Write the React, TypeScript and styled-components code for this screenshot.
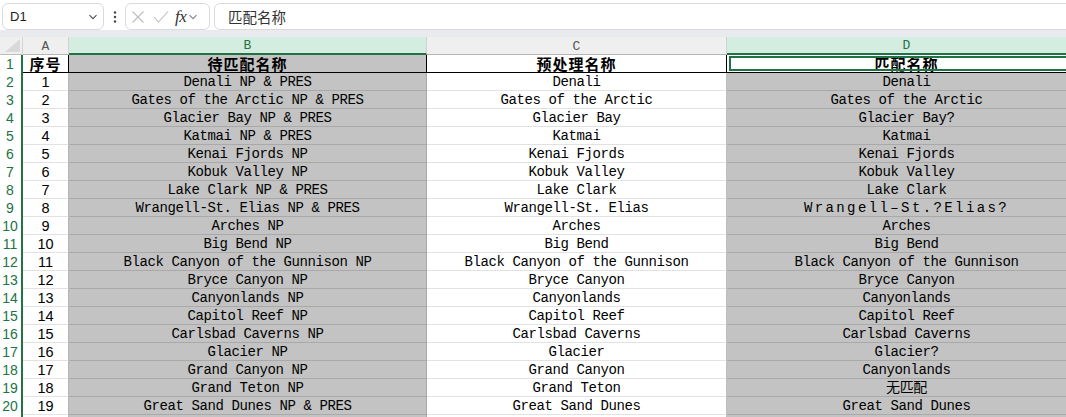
import React from "react";
import styled, { createGlobalStyle, css } from "styled-components";

const GREEN = "#217346";
const COLS = "23px 46px 358px 300px 360px";

const Global = createGlobalStyle`
  *, *::before, *::after { box-sizing: border-box; }
  html, body { margin: 0; padding: 0; background: #fff; overflow: hidden; }
  body { font-family: "Liberation Sans", "Noto Sans CJK SC", sans-serif; }
`;

const Page = styled.div`
  width: 1066px;
  height: 417px;
  overflow: hidden;
  display: flex;
  flex-direction: column;
`;

const Toolbar = styled.div`
  height: 30px;
  display: flex;
  align-items: flex-start;
  padding: 3px 0 0 2px;
  background: #fff;
`;

const Box = styled.div<{ $w?: number }>`
  height: 27px;
  border: 1px solid #dadada;
  border-radius: 6px;
  background: #fff;
  display: flex;
  align-items: center;
  ${(p) => (p.$w ? `width: ${p.$w}px; flex: none;` : "flex: 1; margin-right: -12px;")}
`;

const NameText = styled.span`
  font-family: "Liberation Sans", sans-serif;
  font-size: 13px;
  color: #222;
  padding-left: 7px;
  flex: 1;
`;

const Chevron = styled.svg`
  flex: none;
`;

const Dots = styled.div`
  width: 21px;
  height: 27px;
  display: flex;
  align-items: center;
  justify-content: center;
  flex: none;
`;

const FxInner = styled.div`
  display: flex;
  align-items: center;
  padding-left: 5px;
`;

const Fx = styled.span`
  font-family: "Liberation Serif", "DejaVu Serif", serif;
  font-style: italic;
  font-size: 17px;
  color: #333;
  margin: 0 2px 0 6px;
  letter-spacing: -0.5px;
`;

const Gap = styled.div<{ $w: number }>`
  width: ${(p) => p.$w}px;
  flex: none;
`;

const FormulaText = styled.span`
  font-family: "Noto Sans CJK SC", sans-serif;
  font-size: 14.5px;
  color: #333;
  padding-left: 13px;
`;

const Band = styled.div`
  height: 7px;
  background: #e9eaee;
  flex: none;
`;

const Sheet = styled.div`
  display: grid;
  grid-template-columns: ${COLS};
  grid-auto-rows: 18px;
`;

const Corner = styled.div`
  background: #efefef;
  border-right: 1px solid #d4d4d4;
  border-bottom: 1px solid #bdbdbd;
  display: flex;
  align-items: flex-end;
  justify-content: flex-end;
  padding: 0 2px 2px 0;
`;

const ColHead = styled.div<{ $sel?: boolean }>`
  background: ${(p) => (p.$sel ? "#d3ede0" : "#efefef")};
  border-right: 1px solid #d2d2d2;
  border-bottom: ${(p) => (p.$sel ? `2px solid ${GREEN}` : "1px solid #b4b4b4")};
  color: ${(p) => (p.$sel ? GREEN : "#555")};
  font-family: "Liberation Mono", monospace;
  font-size: 13px;
  line-height: 1;
  display: flex;
  align-items: center;
  justify-content: center;
  padding-top: 1px;
`;

const RowHead = styled.div`
  background: #fff;
  border-right: 2px solid ${GREEN};
  color: ${GREEN};
  font-family: "Liberation Sans", sans-serif;
  font-size: 14px;
  line-height: 1;
  display: flex;
  align-items: center;
  justify-content: center;
  padding-right: 1px;
`;

const Cell = styled.div<{ $gray?: boolean; $head?: boolean; $num?: boolean; $active?: boolean; $edge?: string; $wide?: boolean }>`
  position: relative;
  background: ${(p) => (p.$gray ? "#c3c3c3" : "#fff")};
  border-bottom: 1px solid ${(p) => (p.$gray ? "#a9a9a9" : "#e2e2e2")};
  border-right: 1px solid ${(p) => p.$edge || (p.$gray ? "#a9a9a9" : "#d6d6d6")};
  color: #000;
  display: flex;
  align-items: center;
  justify-content: center;
  white-space: nowrap;
  line-height: 1;
  padding-top: 1px;
  font-family: "Liberation Mono", "Noto Sans CJK SC", monospace;
  font-size: 14px;
  letter-spacing: ${(p) => (p.$wide ? "2.4px" : "-0.4px")};
  ${(p) =>
    p.$num &&
    css`
      font-family: "Liberation Sans", sans-serif;
      font-size: 14.5px;
      letter-spacing: 0;
    `}
  ${(p) =>
    p.$head &&
    css`
      font-family: "Noto Sans CJK SC", sans-serif;
      font-weight: 700;
      font-size: 15px;
      letter-spacing: 1px;
      padding-top: 0;
      border-bottom: 1px solid #000;
      border-right: 1px solid #000;
    `}
  ${(p) =>
    p.$active &&
    css`
      &::after {
        content: "";
        position: absolute;
        top: 1px;
        left: 2px;
        right: -4px;
        bottom: 1px;
        border: 2px solid ${GREEN};
      }
    `}
`;

const rows: [string, string, string][] = [
  ["Denali NP & PRES", "Denali", "Denali"],
  ["Gates of the Arctic NP & PRES", "Gates of the Arctic", "Gates of the Arctic"],
  ["Glacier Bay NP & PRES", "Glacier Bay", "Glacier Bay?"],
  ["Katmai NP & PRES", "Katmai", "Katmai"],
  ["Kenai Fjords NP", "Kenai Fjords", "Kenai Fjords"],
  ["Kobuk Valley NP", "Kobuk Valley", "Kobuk Valley"],
  ["Lake Clark NP & PRES", "Lake Clark", "Lake Clark"],
  ["Wrangell-St. Elias NP & PRES", "Wrangell-St. Elias", "Wrangell\u2012St.?Elias?"],
  ["Arches NP", "Arches", "Arches"],
  ["Big Bend NP", "Big Bend", "Big Bend"],
  ["Black Canyon of the Gunnison NP", "Black Canyon of the Gunnison", "Black Canyon of the Gunnison"],
  ["Bryce Canyon NP", "Bryce Canyon", "Bryce Canyon"],
  ["Canyonlands NP", "Canyonlands", "Canyonlands"],
  ["Capitol Reef NP", "Capitol Reef", "Capitol Reef"],
  ["Carlsbad Caverns NP", "Carlsbad Caverns", "Carlsbad Caverns"],
  ["Glacier NP", "Glacier", "Glacier?"],
  ["Grand Canyon NP", "Grand Canyon", "Canyonlands"],
  ["Grand Teton NP", "Grand Teton", "无匹配"],
  ["Great Sand Dunes NP & PRES", "Great Sand Dunes", "Great Sand Dunes"],
  ["", "", ""],
];

const SmallChevron = ({ color = "#666" }: { color?: string }) => (
  <Chevron width="10" height="10" viewBox="0 0 10 10">
    <path d="M1.5 3.2 L5 6.7 L8.5 3.2" fill="none" stroke={color} strokeWidth="1.2" />
  </Chevron>
);

export default function App() {
  return (
    <Page>
      <Global />
      <Toolbar>
        <Box $w={102}>
          <NameText>D1</NameText>
          <SmallChevron color="#555" />
          <Gap $w={5} />
        </Box>
        <Dots>
          <svg width="4" height="12" viewBox="0 0 4 12">
            <circle cx="2" cy="1.5" r="1.2" fill="#444" />
            <circle cx="2" cy="6" r="1.2" fill="#444" />
            <circle cx="2" cy="10.5" r="1.2" fill="#444" />
          </svg>
        </Dots>
        <Box $w={85}>
          <FxInner>
            <svg width="14" height="14" viewBox="0 0 14 14">
              <path d="M1.5 1.5 L12.5 12.5 M12.5 1.5 L1.5 12.5" stroke="#bcbcbc" strokeWidth="1.1" fill="none" />
            </svg>
            <Gap $w={8} />
            <svg width="16" height="14" viewBox="0 0 16 14">
              <path d="M1 7 L5.5 12 L15 1.5" stroke="#bcbcbc" strokeWidth="1.1" fill="none" />
            </svg>
            <Fx>fx</Fx>
            <SmallChevron color="#888" />
          </FxInner>
        </Box>
        <Gap $w={4} />
        <Box>
          <FormulaText>匹配名称</FormulaText>
        </Box>
      </Toolbar>
      <Band />
      <Sheet>
        <Corner>
          <svg width="15" height="13" viewBox="0 0 15 13">
            <path d="M15 0 L15 13 L0 13 Z" fill="#d9d9d9" />
          </svg>
        </Corner>
        <ColHead>A</ColHead>
        <ColHead $sel>B</ColHead>
        <ColHead>C</ColHead>
        <ColHead $sel>D</ColHead>

        <RowHead>1</RowHead>
        <Cell $head>序号</Cell>
        <Cell $head $gray>待匹配名称</Cell>
        <Cell $head>预处理名称</Cell>
        <Cell $head $active>匹配名称</Cell>

        {rows.map((r, i) => (
          <React.Fragment key={i}>
            <RowHead>{i < 19 ? i + 2 : ""}</RowHead>
            <Cell $num $edge="#b5b5b5">{i < 19 ? i + 1 : ""}</Cell>
            <Cell $gray>{r[0]}</Cell>
            <Cell $edge="#bdbdbd">{r[1]}</Cell>
            <Cell $gray $wide={i === 7}>{r[2]}</Cell>
          </React.Fragment>
        ))}
      </Sheet>
    </Page>
  );
}
